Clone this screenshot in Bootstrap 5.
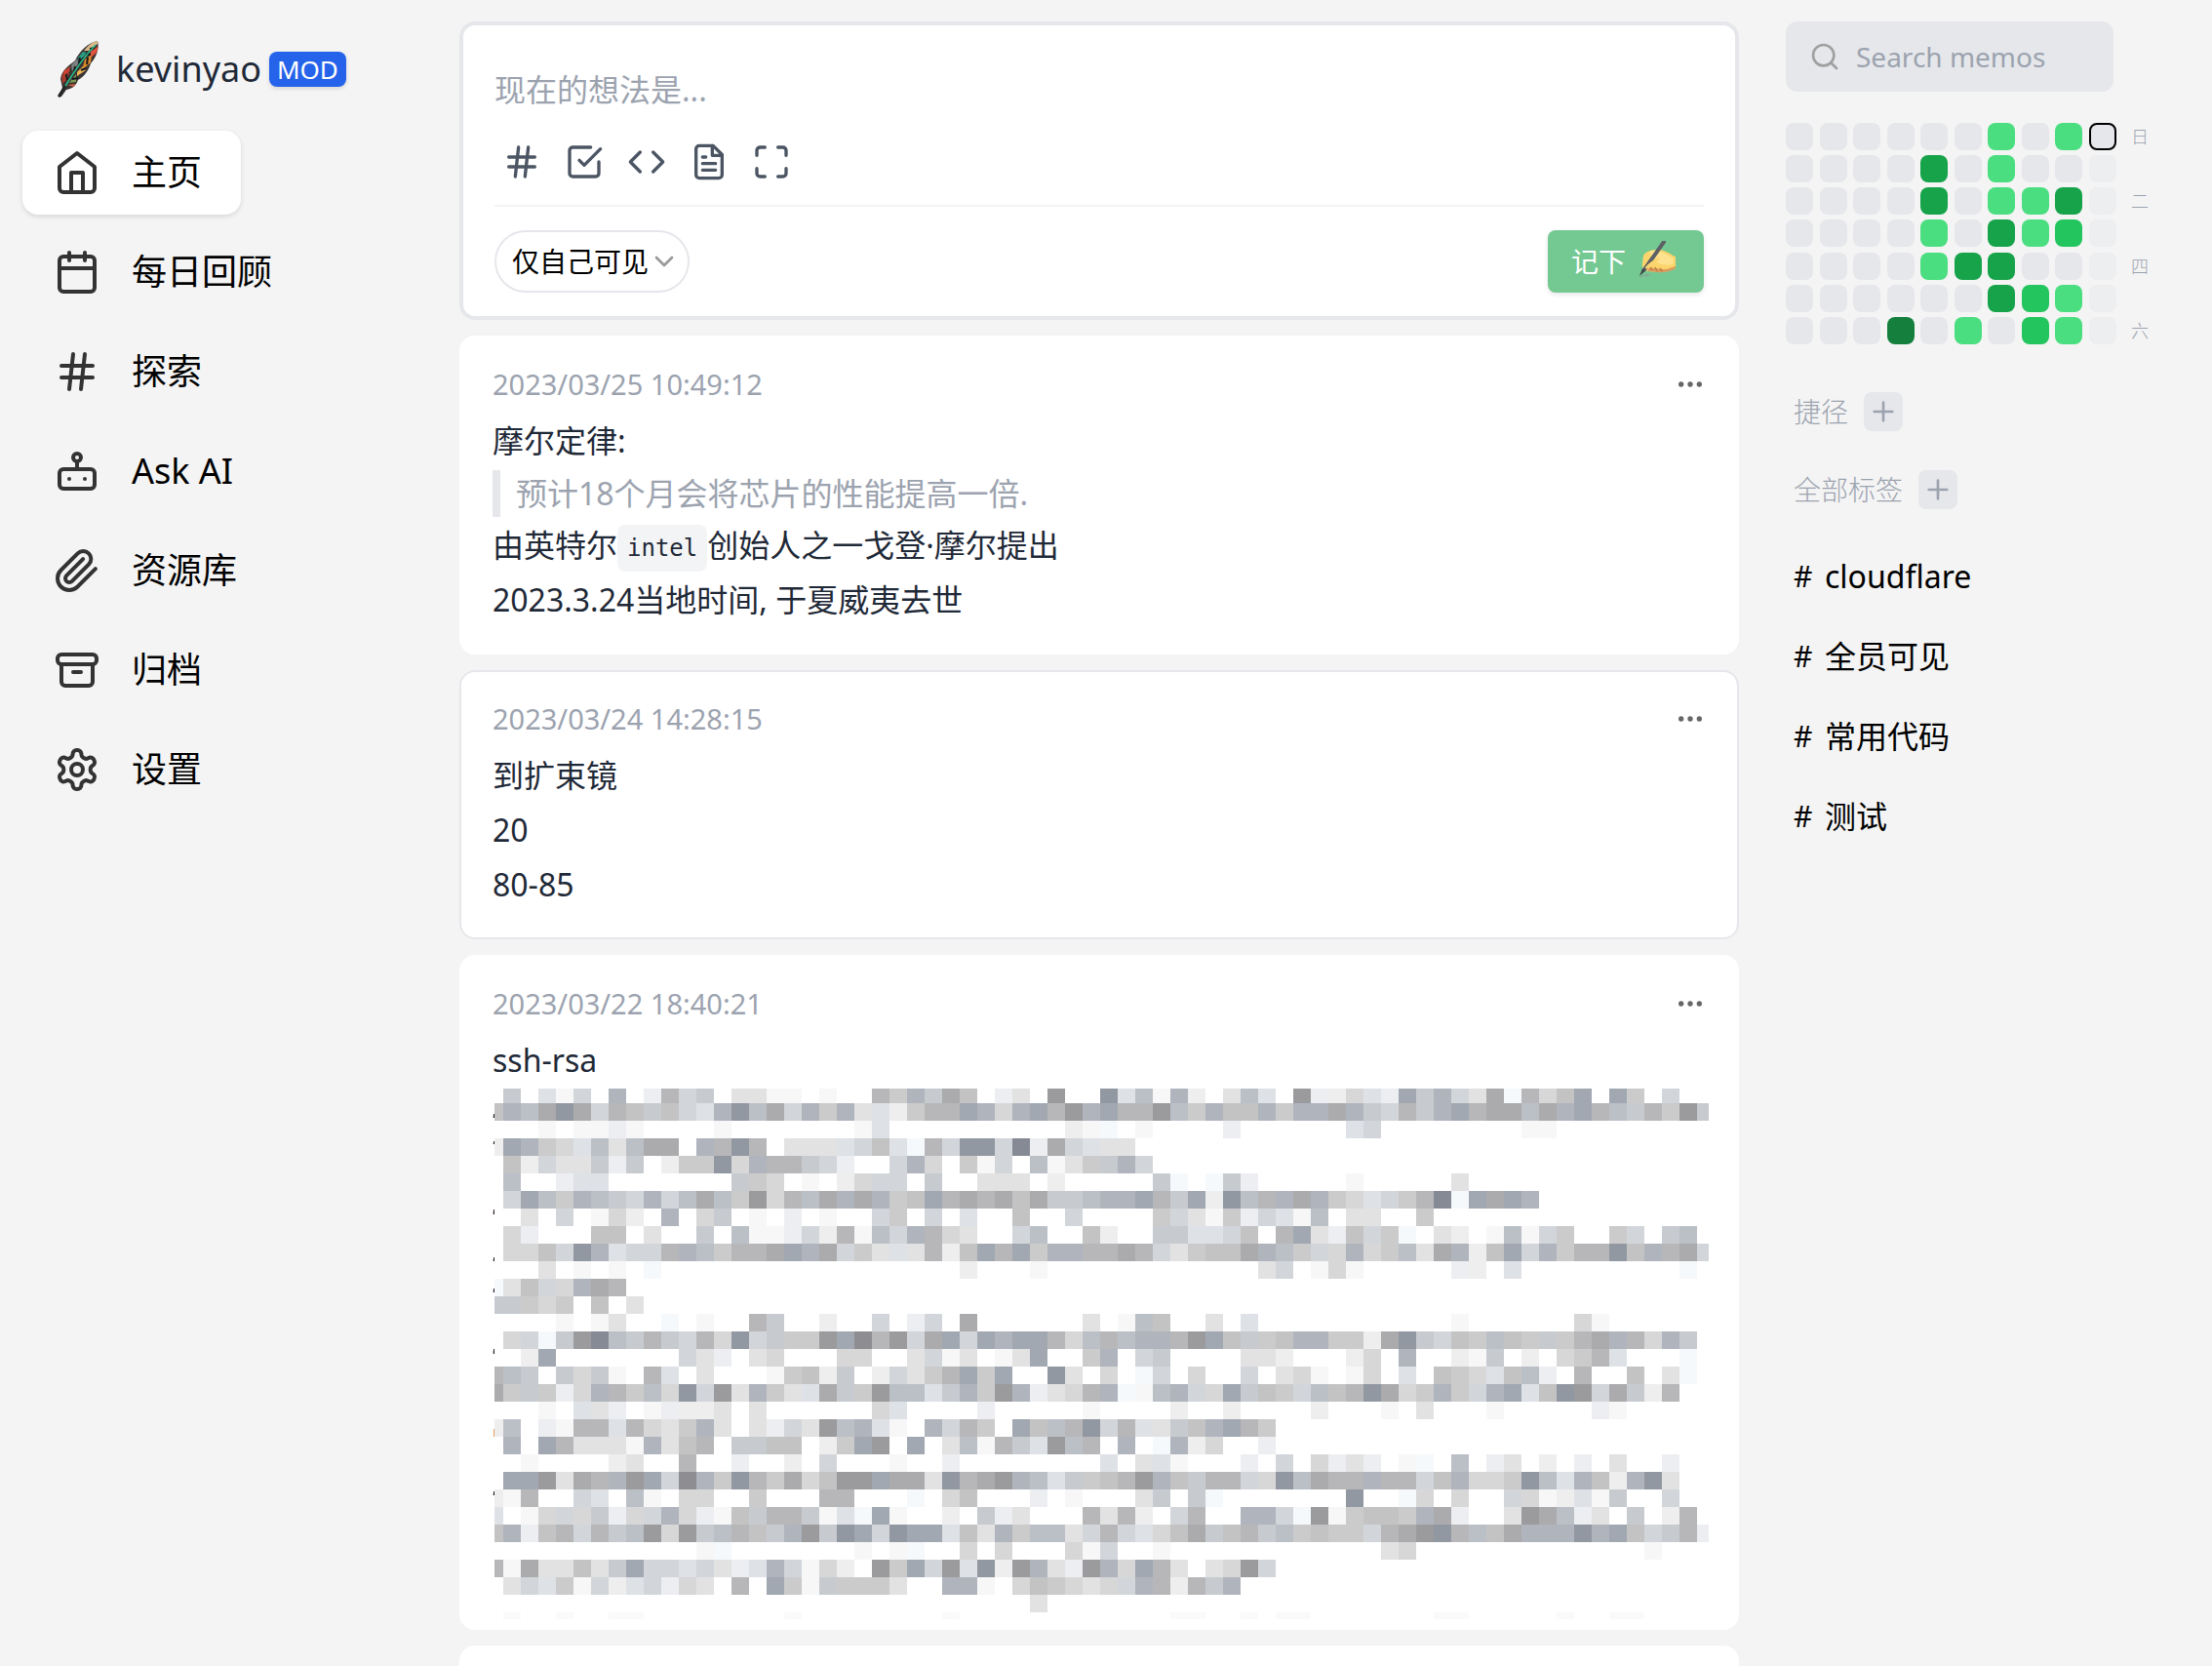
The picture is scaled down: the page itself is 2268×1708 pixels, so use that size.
<!DOCTYPE html>
<html lang="zh-CN">
<head>
<meta charset="utf-8">
<meta name="viewport" content="width=device-width, initial-scale=1">
<title>kevinyao</title>
<link href="https://cdn.jsdelivr.net/npm/bootstrap@5.3.0/dist/css/bootstrap.min.css" rel="stylesheet">
<style>
:root{--ink:#1f2937;--muted:#9ca3af;--line:#e5e7eb}
body{background:#f4f4f4;color:var(--ink);font-family:"Noto Sans","Noto Sans CJK SC",sans-serif;font-size:32px;line-height:48px;overflow-x:hidden}
svg.ico{fill:none;stroke:currentColor;stroke-width:2;stroke-linecap:round;stroke-linejoin:round;flex:none;display:block}
.side-left{width:448px;flex:none}
.side-right{width:485px;flex:none}
.page-pad{padding-left:23px}
.top-gap{padding-top:22px}
.main-col{min-width:0}
.brand-row{padding:8px 0 0 32px;height:134px}
.brand-name{font-size:36px;line-height:96px;color:var(--ink);margin-left:14px}
.mod-tag{background:#2563eb;color:#fff;font-size:26px;line-height:36px;padding:0 8px;border-radius:8px;font-weight:400;box-shadow:0 2px 4px rgba(0,0,0,.12)}
.nav-entry{color:#000;font-size:36px;line-height:54px;padding:16px 40px 16px 32px;border-radius:16px;gap:32px;text-decoration:none}
.nav-entry .ico{color:#333}
.nav-entry.current{background:#fff;box-shadow:0 2px 5px rgba(0,0,0,.12)}
.editor{border:4px solid var(--line);border-radius:16px;background:#fff;padding:24px 32px}
.editor textarea{border:0;outline:0;resize:none;height:88px;padding:18px 0;font-size:32px;line-height:48px;overflow:hidden;background:transparent}
.editor textarea::placeholder{color:var(--muted);opacity:1}
.tool{border:0;background:none;width:56px;height:56px;padding:0;color:#4b5563}
.editor-foot{border-top:2px solid #f3f4f6;padding-top:24px;margin-top:16px}
.vis{appearance:none;height:64px;width:200px;border:2px solid var(--line);border-radius:32px;background:#fff;color:#000;font-size:28px;line-height:42px;padding:0 16px}
.vis-arrow{position:absolute;right:10px;top:16px;color:#999;pointer-events:none}
.save{width:160px;height:64px;border:0;border-radius:8px;background:#74c993;color:#fff;font-size:28px;line-height:42px;padding:0 24px;gap:12px;box-shadow:0 2px 5px rgba(0,0,0,.1)}
.save svg{flex:none}
.memo{border:2px solid #fff;border-radius:16px;background:#fff;padding:24px 32px 26px}
.memo.hovered{border-color:var(--line)}
.memo-head{height:48px;margin-bottom:6px}
.memo-head time{color:var(--muted);font-size:29px}
.memo-more{border:0;background:none;padding:0;color:#666}
.memo p{margin:0;line-height:56px}
.memo blockquote{margin:2px 0 1px;border-left:8px solid var(--line);padding-left:16px;color:var(--muted);line-height:48px}
.memo code{display:inline-block;vertical-align:middle;background:#f3f4f6;color:var(--ink);font:24px/48px "DejaVu Sans Mono",monospace;border-radius:8px;padding:0 10px}
.mosaic{display:block;margin-bottom:-18px;overflow:visible}
.search{width:336px;height:72px;border-radius:12px;background:var(--line);padding:0 24px;gap:16px;margin:0}
.search .ico{color:#a0a0a0}
.search input{border:0;outline:0;background:none;min-width:0;font-size:28px;line-height:42px;padding:0}
.search input::placeholder{color:var(--muted);opacity:1}
.heat{height:227px;margin:32px 0 49px}
.heat-grid{display:grid;grid-template:repeat(7,28px)/repeat(10,28px);width:339px;justify-content:space-between;align-content:space-between}
.cell{border-radius:8px;background:var(--line)}
.lv1{background:#4ade80}.lv2{background:#22c55e}.lv3{background:#16a34a}.lv4{background:#15803d}
.future{opacity:.5}.today{border:2px solid #000}
.week{color:var(--muted);font-size:18px;line-height:28px;font-weight:300;margin-left:15px}
.group-row{color:var(--muted);font-size:28px;line-height:40px;font-weight:300;gap:16px;padding-left:8px;margin-bottom:40px}
.add{border:0;border-radius:8px;width:40px;height:40px;padding:4px;background:var(--line);color:var(--muted)}
.tag-list{gap:32px;margin-top:44px}
.tag-link{color:#000;text-decoration:none;padding-left:8px;line-height:50px;gap:12px}
.tag-link b{font-weight:400;font-size:30px;width:20px}
</style>
<script defer src="https://cdn.jsdelivr.net/npm/bootstrap@5.3.0/dist/js/bootstrap.bundle.min.js"></script>
</head>
<body>
<div class="d-flex page-pad">
  <aside class="side-left">
    <div class="brand-row d-flex align-items-center">
      <svg width="50" height="64" viewBox="0 0 50 64" aria-hidden="true">
        <path d="M45 3C35 5 27 13 22 23C16 28 8 33 7 42L9 51L5 61L8 60L13 53C19 52 23 49 25 43C31 40 36 33 38 26C44 20 47 10 45 3Z" fill="#3a3533"/>
        <path d="M45 3C39 4 35 8 31 13L36 13L45 6Z" fill="#d9b98a"/>
        <path d="M46 8L38 14L37 21L44 15Z" fill="#e0523f"/>
        <path d="M30 14L25 20L26 25L34 15Z" fill="#2a9c80"/>
        <path d="M39 17L32 22L29 33L38 25Z" fill="#dd8a2c"/>
        <path d="M24 21L18 28L19 34L26 26Z" fill="#7b7f80"/>
        <path d="M17 29L10 34L9 40L16 35Z" fill="#c9402f"/>
        <path d="M30 29L24 35L24 39L33 33Z" fill="#f0b455"/>
        <path d="M8 38L9 47L14 42L16 36Z" fill="#a53a2c"/>
        <path d="M23 37L16 46L23 45Z" fill="#7e9a50"/>
        <path d="M14 48L20 50L23 47Z" fill="#cf5f42"/>
        <path d="M27 20L26 26L31 20M35 20L34 27M22 29L21 34M28 33L33 31M13 37L14 43M19 42L25 41M37 11L42 10M33 16L38 17" fill="none" stroke="#16181d" stroke-width="2"/>
        <path d="M43 7C31 19 21 34 11 51" fill="none" stroke="#25c08c" stroke-width="1.5"/>
        <path d="M12 49L5 60" stroke="#222" stroke-width="2.5"/>
      </svg>
      <span class="brand-name">kevinyao</span>
      <span class="mod-tag ms-2">MOD</span>
    </div>
    <nav class="d-flex flex-column align-items-start gap-3">
      <a class="nav-entry current d-flex align-items-center" href="#" aria-current="page"><svg class="ico" width="48" height="48" viewBox="0 0 24 24"><path d="m3 9 9-7 9 7v11a2 2 0 0 1-2 2H5a2 2 0 0 1-2-2z"/><path d="M9 22V12h6v10"/></svg>主页</a>
      <a class="nav-entry d-flex align-items-center" href="#"><svg class="ico" width="48" height="48" viewBox="0 0 24 24"><rect x="3" y="4" width="18" height="18" rx="2"/><path d="M16 2v4M8 2v4M3 10h18"/></svg>每日回顾</a>
      <a class="nav-entry d-flex align-items-center" href="#"><svg class="ico" width="48" height="48" viewBox="0 0 24 24"><path d="M4 9h16M4 15h16M10 3 8 21M16 3l-2 18"/></svg>探索</a>
      <a class="nav-entry d-flex align-items-center" href="#"><svg class="ico" width="48" height="48" viewBox="0 0 24 24"><rect x="3" y="11" width="18" height="10" rx="2"/><circle cx="12" cy="5" r="2"/><path d="M12 7v4M8 16v0M16 16v0"/></svg>Ask AI</a>
      <a class="nav-entry d-flex align-items-center" href="#"><svg class="ico" width="48" height="48" viewBox="0 0 24 24"><path d="m21.44 11.05-9.19 9.19a6 6 0 0 1-8.49-8.49l8.57-8.57A4 4 0 1 1 18 8.84l-8.59 8.57a2 2 0 0 1-2.83-2.83l8.49-8.48"/></svg>资源库</a>
      <a class="nav-entry d-flex align-items-center" href="#"><svg class="ico" width="48" height="48" viewBox="0 0 24 24"><rect x="2" y="4" width="20" height="5" rx="2"/><path d="M4 9v9a2 2 0 0 0 2 2h12a2 2 0 0 0 2-2V9M10 13h4"/></svg>归档</a>
      <a class="nav-entry d-flex align-items-center" href="#"><svg class="ico" width="48" height="48" viewBox="0 0 24 24"><path d="M12.22 2h-.44a2 2 0 0 0-2 2v.18a2 2 0 0 1-1 1.73l-.43.25a2 2 0 0 1-2 0l-.15-.08a2 2 0 0 0-2.73.73l-.22.38a2 2 0 0 0 .73 2.73l.15.1a2 2 0 0 1 1 1.72v.51a2 2 0 0 1-1 1.74l-.15.09a2 2 0 0 0-.73 2.73l.22.38a2 2 0 0 0 2.73.73l.15-.08a2 2 0 0 1 2 0l.43.25a2 2 0 0 1 1 1.73V20a2 2 0 0 0 2 2h.44a2 2 0 0 0 2-2v-.18a2 2 0 0 1 1-1.73l.43-.25a2 2 0 0 1 2 0l.15.08a2 2 0 0 0 2.73-.73l.22-.39a2 2 0 0 0-.73-2.73l-.15-.08a2 2 0 0 1-1-1.74v-.5a2 2 0 0 1 1-1.74l.15-.09a2 2 0 0 0 .73-2.73l-.22-.38a2 2 0 0 0-2.73-.73l-.15.08a2 2 0 0 1-2 0l-.43-.25a2 2 0 0 1-1-1.73V4a2 2 0 0 0-2-2z"/><circle cx="12" cy="12" r="3"/></svg>设置</a>
    </nav>
  </aside>

  <main class="main-col flex-grow-1 d-flex flex-column gap-3 pb-4 top-gap">
    <form class="editor">
      <textarea class="w-100 d-block" aria-label="memo" placeholder="现在的想法是..."></textarea>
      <div class="d-flex gap-2">
        <button type="button" class="tool d-flex align-items-center justify-content-center" aria-label="tag"><svg class="ico" width="40" height="40" viewBox="0 0 24 24"><path d="M4 9h16M4 15h16M10 3 8 21M16 3l-2 18"/></svg></button>
        <button type="button" class="tool d-flex align-items-center justify-content-center" aria-label="todo"><svg class="ico" width="40" height="40" viewBox="0 0 24 24"><path d="m9 11 3 3L22 4"/><path d="M21 12v7a2 2 0 0 1-2 2H5a2 2 0 0 1-2-2V5a2 2 0 0 1 2-2h11"/></svg></button>
        <button type="button" class="tool d-flex align-items-center justify-content-center" aria-label="code"><svg class="ico" width="40" height="40" viewBox="0 0 24 24"><path d="m16 18 6-6-6-6M8 6l-6 6 6 6"/></svg></button>
        <button type="button" class="tool d-flex align-items-center justify-content-center" aria-label="file"><svg class="ico" width="40" height="40" viewBox="0 0 24 24"><path d="M14.500 2H6a2 2 0 0 0-2 2v16a2 2 0 0 0 2 2h12a2 2 0 0 0 2-2V7.500z"/><path d="M14 2v6h6M16 13H8M16 17H8M10 9H8"/></svg></button>
        <button type="button" class="tool d-flex align-items-center justify-content-center" aria-label="fullscreen"><svg class="ico" width="40" height="40" viewBox="0 0 24 24"><path d="M8 3H5a2 2 0 0 0-2 2v3M21 8V5a2 2 0 0 0-2-2h-3M3 16v3a2 2 0 0 0 2 2h3M16 21h3a2 2 0 0 0 2-2v-3"/></svg></button>
      </div>
      <div class="editor-foot d-flex justify-content-between">
        <div class="position-relative">
          <select class="vis" aria-label="visibility"><option>仅自己可见</option></select>
          <svg class="ico vis-arrow" width="32" height="32" viewBox="0 0 24 24"><path d="m6 9 6 6 6-6"/></svg>
        </div>
        <button type="button" class="save d-flex align-items-center">记下
          <svg width="42" height="42" viewBox="0 0 42 42" aria-hidden="true">
            <path d="M6 15C9 10 15 9 22 9C31 10 35 15 39 16L39 28C34 31 27 32 22 32C17 32 13 31 10 31C7 30 4 27 5 23Z" fill="#fbd46b"/>
            <path d="M12 11C20 8 29 13 37 18L36 24C29 26 22 24 17 20Z" fill="#ffe28f"/>
            <path d="M10 29C16 26 22 30 30 29L39 26L39 28C33 32 24 33 20 32L11 31Z" fill="#d79a5d"/>
            <path d="M13 27L15 30M18 27L20 31M23 28L25 31" stroke="#c07f45" stroke-width="1.5"/>
            <path d="M8 28L27 1" stroke="#5d6064" stroke-width="4" stroke-linecap="round"/>
            <path d="M2 36L5 28L9 30Z" fill="#43474b"/>
            <path d="M8 27C12 22 16 20 22 16C24 18 21 21 16 24L9 29" fill="#fcd56e"/>
            <path d="M2 37L11 34L8 36L14 35" fill="none" stroke="#8ba495" stroke-width="1"/>
          </svg>
        </button>
      </div>
    </form>

    <article class="memo">
      <div class="memo-head d-flex justify-content-between align-items-center"><time>2023/03/25 10:49:12</time><button class="memo-more" aria-label="more"><svg class="ico" width="32" height="32" viewBox="0 0 24 24"><circle cx="5" cy="12" r="1"/><circle cx="12" cy="12" r="1"/><circle cx="19" cy="12" r="1"/></svg></button></div>
      <p>摩尔定律:</p>
      <blockquote>预计18个月会将芯片的性能提高一倍.</blockquote>
      <p>由英特尔<code>intel</code>创始人之一戈登·摩尔提出</p>
      <p>2023.3.24当地时间, 于夏威夷去世</p>
    </article>

    <article class="memo hovered">
      <div class="memo-head d-flex justify-content-between align-items-center"><time>2023/03/24 14:28:15</time><button class="memo-more" aria-label="more"><svg class="ico" width="32" height="32" viewBox="0 0 24 24"><circle cx="5" cy="12" r="1"/><circle cx="12" cy="12" r="1"/><circle cx="19" cy="12" r="1"/></svg></button></div>
      <p>到扩束镜</p>
      <p>20</p>
      <p>80-85</p>
    </article>

    <article class="memo">
      <div class="memo-head d-flex justify-content-between align-items-center"><time>2023/03/22 18:40:21</time><button class="memo-more" aria-label="more"><svg class="ico" width="32" height="32" viewBox="0 0 24 24"><circle cx="5" cy="12" r="1"/><circle cx="12" cy="12" r="1"/><circle cx="19" cy="12" r="1"/></svg></button></div>
      <p>ssh-rsa</p>
      <svg class="mosaic" id="mosaic" width="1248" height="546" viewBox="0 0 1248 546" shape-rendering="crispEdges" aria-hidden="true"></svg>
    </article>

    <article class="memo">
      <div class="memo-head"></div>
    </article>
  </main>

  <aside class="side-right ps-5 top-gap">
    <label class="search d-flex align-items-center">
      <svg class="ico" width="32" height="32" viewBox="0 0 24 24"><circle cx="11" cy="11" r="8"/><path d="m21 21-4.300-4.300"/></svg>
      <input type="text" placeholder="Search memos" aria-label="Search memos">
    </label>
    <div class="heat d-flex">
      <div class="heat-grid" id="heat"></div>
      <div class="week d-flex flex-column justify-content-between"><span>日</span><span>二</span><span>四</span><span>六</span></div>
    </div>
    <div class="group-row d-flex align-items-center">捷径<button class="add" aria-label="add shortcut"><svg class="ico" width="32" height="32" viewBox="0 0 24 24"><path d="M12 5v14M5 12h14"/></svg></button></div>
    <div class="group-row d-flex align-items-center">全部标签<button class="add" aria-label="add tag"><svg class="ico" width="32" height="32" viewBox="0 0 24 24"><path d="M12 5v14M5 12h14"/></svg></button></div>
    <div class="tag-list d-flex flex-column">
      <a class="tag-link d-flex" href="#"><b>#</b>cloudflare</a>
      <a class="tag-link d-flex" href="#"><b>#</b>全员可见</a>
      <a class="tag-link d-flex" href="#"><b>#</b>常用代码</a>
      <a class="tag-link d-flex" href="#"><b>#</b>测试</a>
    </div>
  </aside>
</div>

<script>
// Usage heat map: one string per weekday, one digit per week; t = today, f = future
const days = ["000000101t","000030100f","000030113f","000010312f","000013300f","000000321f","000401021f"];
const names = {t:"today", f:"future"};
document.getElementById("heat").innerHTML = days.join("").split("").map(c =>
  `<span class="cell ${names[c] || "lv" + c}"></span>`).join("");

// Censored block: 18px tiles, one character per tile, [columns 0-34, columns 35-69]
const tone = {1:"#f7f7f7",2:"#eee",3:"#e2e2e3",4:"#d7d7d8",5:"#cbcbcc",6:"#c3c3c4",7:"#b7b7b9",8:"#ababad",9:"#9b9b9e",A:"#8d8d92",
 a:"#f6f9fb",b:"#edeef1",c:"#dee1e6",d:"#d2d6da",e:"#c7cbd0",f:"#bbc0c7",g:"#afb4bd",h:"#a1a8b1",i:"#9298a2",j:"#858a95"};
const tiles = [
[".e.c1d.g.b7de.3311.1..75ge86.b3.9..","icf1g2.3fc.9b24cbhegd38a746h.h5.d.."],
["6gf8i8d76e6dcgif8dg5g3c2577hg4gh79g","h779f5g66g5gg8ged7egh788f8gh7fe759e"],
["...1.11b1....1.......1c..........21","a.1....b......cd........11"],
["2hg54cf3f88.g7i7.333cd6ca7diidjb8dc","33"],
[".62d33ebe.255i4g77edb..dg4.51d.f135","egd"],
[".f..bcc.......e54.1.24dd.e..333.2..","...ea.aeb.....1.....3"],
[".dhf5gfedgdf8f5947f8g8g56h787868eef","ggh7eh2if7g8g54cd57jah8hg"],
["..3.d.142.g.4e.1.b.1..d5.d.c..6..d.","...5d315bdc1f.33..5"],
[".4b...66.3..e.f11bd271fdg743..df..6","2..eeccd6.7h3b6d5a.32.1f1d5..5d.ef."],
[".446digcdd7gf5778hg8d53c3726h7h5gg7","787d35668gf5d4g45f38g26hdg577i6g78d"],
["...3.1.1.a.................2...1",".........3d.141.....b2.c.........a"],
["a36d4g87",""],
["ee545.6.3",""],
["....1.13..a.1..7e..2..d.bd.8......3",".1f6..3.c...........1......41"],
[".4dae9jfe7ed74ide559hA79d8hdhghh74f","7fgg79h6e56gg5528ied65f65e578g74ge."],
["..2h.......d3b.34...44..3d13.13h..5","g.de....332...24.g..21e.2.457c...a"],
["7fe.e4e1.7c.3...1562e.2d357h5h..i3.","4.ad.4..d.341.14.c.654c6fb.7..6.3a"],
["85e5b4g75f4id93g53c8e59ffceg59gb347","ga1fgd4he65df67i845g5dghc6i9d8e27"],
["...1.c3b.1b223.3......4c....b.....1","....2..2....2...1.3...1.....b1"],
["2f.b177c7435g3.3bd39fgc1.gd75.h6f7i","d7c3e6gh75"],
[".g.h73331g367.ee66.25h9.h.3f17ec9f7",".g.ag24..b"],
["..1....23..7..b..2.d...1..b","c.3c1...b.d.4b3b.1a.f.b3.2.b.3..b"],
[".hh9387g9hdAg5i7584699h883i789gfce5","679g6e77d4if877g77d6g445ifcg62gi3"],
["217..dc.f1.44..5...77...a.46...b.1","..3e.ea.......i..a4.4..d412c1e..d"],
["c.14d4eb4dg4b16e77e1cah1..2.eb3...7","372.d7..ggda915665g8b..398fb3.e.27"],
["6gb67d7ef949ef76eg9eihdihhc63g5ff3d","7dc468e67ef5655d789i7f68gggigh6de7b"],
["............1a.......1.1a..4.4...41","d..1............34.............1"],
["7183363ehddcd3bcgd142.95hd9ci29g3b9","g4h73.349d"],
[".3dc51d2cdb43.7.h51e5553..gg1.46543","4dg727eg"],
["...............................3",""],
[".1..1..11........1........1","....11..1.11.......11.....1..11"]];
let out = "";
tiles.forEach((pair, r) => {
  const row = pair[0].padEnd(35, ".") + pair[1];
  const y = r ? 16 + 18 * (r - 1) : 1, h = r === 0 ? 15 : r === 30 ? 7 : 18;
  [...row].forEach((c, n) => {
    if (!tone[c]) return;
    const x = n ? 11 + 18 * (n - 1) : 2, w = n === 0 ? 9 : n === 69 ? 12 : 18;
    out += `<rect x="${x}" y="${y}" width="${w}" height="${h}" fill="${r === 30 ? "#fafafa" : tone[c]}"/>`;
  });
});
// Slivers of the covered letters left of the tiles
[[27,4],[55,3],[125,5],[174,4],[206,4],[268,5],[414,4]].forEach(([y, h]) => {
  out += `<rect x="1" y="${y}" width="1" height="${h}" fill="#2b2430"/><rect x="0" y="${y + 2}" width="1" height="${h - 2}" fill="#c9c1b8"/>`;
});
out += '<rect x="1" y="350" width="1" height="8" fill="#e8a060"/>';
document.getElementById("mosaic").innerHTML = out;
</script>
</body>
</html>
